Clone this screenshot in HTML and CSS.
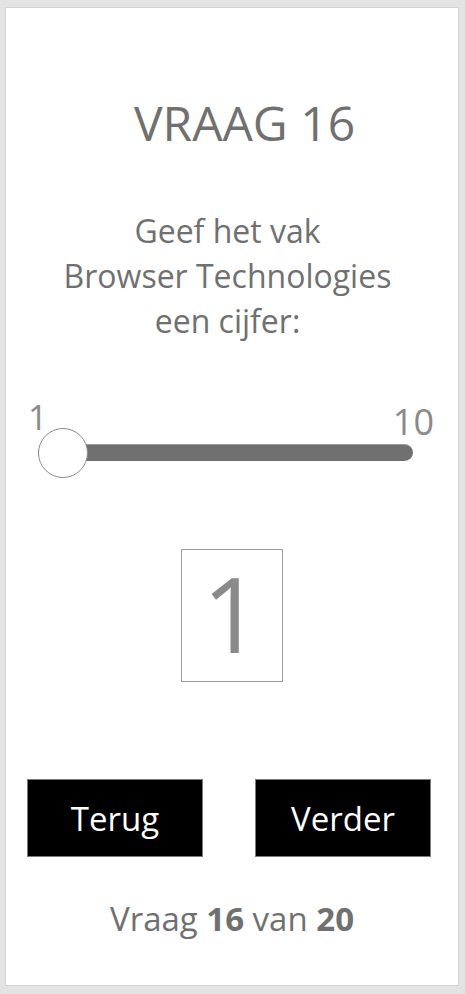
FILE: index.html
```html
<!DOCTYPE html>
<html lang="nl">
<head>
<meta charset="utf-8">
<title>Vraag 16</title>
<link rel="stylesheet" href="styles.css">
</head>
<body>
<main class="card">
  <h1 class="title">VRAAG 16</h1>
  <p class="question">Geef het vak<br>Browser Technologies<br>een cijfer:</p>
  <div class="scale">
    <div class="scale-labels">
      <span class="label-min">1</span>
      <span class="label-max">10</span>
    </div>
    <input class="slider" type="range" min="1" max="10" value="1" aria-label="Cijfer">
  </div>
  <output class="value">1</output>
  <div class="actions">
    <button class="btn" type="button">Terug</button>
    <button class="btn" type="button">Verder</button>
  </div>
  <p class="progress">Vraag <b>16</b> van <b>20</b></p>
</main>
</body>
</html>
```
FILE: styles.css
```css
html, body {
  margin: 0;
  padding: 0;
}
body {
  background: #e3e3e3;
  font-family: "Open Sans", "Noto Sans", sans-serif;
  color: #707070;
  padding: 7px 6px 6px 5px;
}
.card {
  background: #fff;
  border: 1px solid #d2d2d2;
  height: 979px;
  box-sizing: border-box;
  display: flex;
  flex-direction: column;
  align-items: center;
}
.title {
  margin: 86px 0 0;
  padding-left: 25px;
  font-size: 48px;
  line-height: 58px;
  font-weight: 400;
  letter-spacing: 0;
}
.question {
  margin: 56px 0 0;
  padding-right: 9px;
  font-size: 32px;
  line-height: 45px;
  text-align: center;
}
.scale {
  margin-top: 57px;
  width: 100%;
  display: flex;
  flex-direction: column;
}
.scale-labels {
  display: flex;
  justify-content: space-between;
  align-items: flex-start;
  padding: 0 24px 0 22px;
  margin-bottom: -12px;
  color: #8a8a8a;
}
.label-min {
  font-size: 34px;
  line-height: 34px;
}
.label-max {
  font-size: 36px;
  line-height: 34px;
  margin-top: 5px;
}
.slider {
  -webkit-appearance: none;
  appearance: none;
  display: block;
  width: 375px;
  height: 50px;
  margin: 0 0 0 32px;
  padding: 0;
  background: transparent;
}
.slider::-webkit-slider-runnable-track {
  height: 17px;
  background: #707070;
  border-radius: 9px;
  border-top: 1px solid #9a9a9a;
  box-sizing: border-box;
}
.slider::-webkit-slider-thumb {
  -webkit-appearance: none;
  appearance: none;
  width: 50px;
  height: 50px;
  border-radius: 50%;
  background: #fff;
  border: 1px solid #8a8a8a;
  box-sizing: border-box;
  margin-top: -17px;
}
.value {
  display: flex;
  align-items: center;
  justify-content: center;
  margin-top: 72px;
  width: 102px;
  height: 133px;
  box-sizing: border-box;
  border: 1px solid #9a9a9a;
  padding-bottom: 6px;
  font-size: 104px;
  line-height: 1;
  color: #8a8a8a;
}
.actions {
  margin-top: 97px;
  display: flex;
  gap: 52px;
  padding-right: 6px;
}
.btn {
  width: 176px;
  height: 78px;
  box-sizing: border-box;
  background: #000;
  color: #fff;
  border: 1px solid #7a7a7a;
  font-family: "Open Sans", "Noto Sans", sans-serif;
  font-size: 33px;
  padding: 0;
}
.progress {
  margin: 42px 0 0;
  font-size: 33px;
  line-height: 40px;
}
.progress b {
  font-weight: 700;
}
```
